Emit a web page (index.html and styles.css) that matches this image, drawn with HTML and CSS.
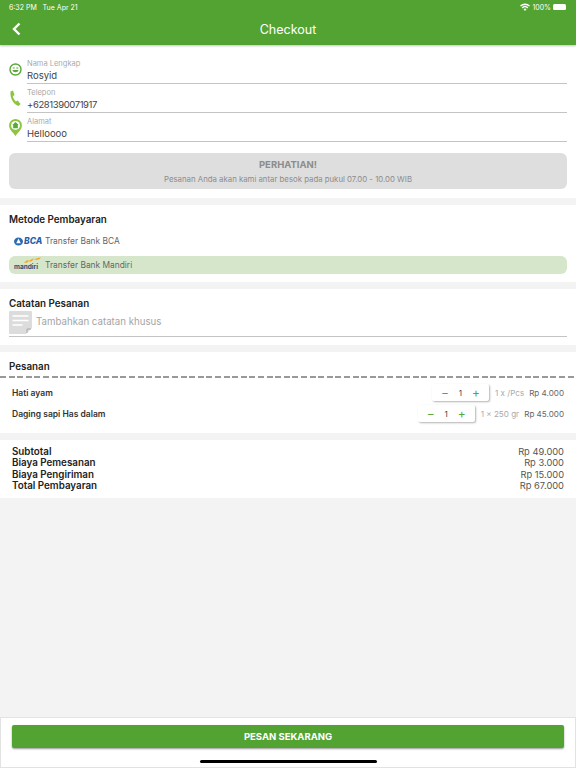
FILE: index.html
```html
<!doctype html>
<html>
    <head>
        <meta http-equiv="Content-Type" content="text/html; charset=utf-8">
        <title>Checkout</title>
        <link rel="stylesheet" href="styles.css">
    </head>
    <body>
        <div class="main">
            <div class="top">
                <div class="status">
                    <span>6:32 PM &nbsp; Tue Apr 21</span>
                    <span class="status-right">
                        <svg width="10" height="8" viewBox="0 0 10 8"><path d="M5 8 3.500 6.300a2 2 0 0 1 3 0zM2.700 5.400 1.700 4.300a4.800 4.800 0 0 1 6.600 0l-1 1.100a3.400 3.400 0 0 0-4.600 0zM1 3.500 0 2.500a7.300 7.300 0 0 1 10 0L9 3.500a5.900 5.900 0 0 0-8 0z" fill="#fff"/></svg>
                        100%
                        <i class="battery"></i>
                    </span>
                </div>
                <div class="bar">
                    <svg class="back" width="9" height="14" viewBox="0 0 9 14"><path d="M7.500 1.500 2 7l5.500 5.500" fill="none" stroke="#fff" stroke-width="2.400"/></svg>
                    <span>Checkout</span>
                </div>
            </div>

            <div class="card form">
                <div class="field">
                    <svg class="icon" width="13" height="13" viewBox="0 0 13 13"><circle cx="6.500" cy="6.500" r="5.500" fill="none" stroke="#5aa83a" stroke-width="1.400"/><path d="M3.700 5h2M7.300 5h2" stroke="#5aa83a"/><path d="M3.500 7h6C9.200 10 3.800 10 3.500 7z" fill="#5aa83a"/></svg>
                    <div class="input">
                        <label>Nama Lengkap</label>
                        <div class="value">Rosyid</div>
                    </div>
                </div>
                <div class="field">
                    <svg class="icon" width="13" height="18" viewBox="0 0 12 18"><path d="M1 1.600 3.500.500 5 5 3.400 6.200c.4 2 1.400 3.800 3 5.200l1.700-.8 3 3.400-2 1.900C4.500 15.500.200 8 1 1.600z" fill="#8cc63f"/></svg>
                    <div class="input">
                        <label>Telepon</label>
                        <div class="value phone">+6281390071917</div>
                    </div>
                </div>
                <div class="field">
                    <svg class="icon" width="13" height="17" viewBox="0 0 12 16"><path d="M6 16C4.500 13 0 10.500 0 6a6 6 0 0 1 12 0c0 4.500-4.500 7-6 10z" fill="#8cc63f"/><circle cx="6" cy="6" r="4.200" fill="#fff"/><path d="M6 2.800 9 5.600H8.200V8.600H3.800V5.600H3z" fill="#5aa83a"/></svg>
                    <div class="input">
                        <label>Alamat</label>
                        <div class="value">Helloooo</div>
                    </div>
                </div>
                <div class="notice">
                    <strong>PERHATIAN!</strong>
                    <p>Pesanan Anda akan kami antar besok pada pukul 07.00 - 10.00 WIB</p>
                </div>
            </div>

            <div class="card pay">
                <h3>Metode Pembayaran</h3>
                <div class="bank">
                    <span class="logo">
                        <svg width="9" height="9" viewBox="0 0 10 9"><ellipse cx="5" cy="4.500" rx="5" ry="4.500" fill="#2a6db5"/><path d="M5 1.200 7.500 6.500h-5z" fill="#fff"/></svg>
                        <b class="bca">BCA</b>
                    </span>
                    Transfer Bank BCA
                </div>
                <div class="bank selected">
                    <span class="logo mandiri">
                        <b>mandiri</b>
                        <svg width="17" height="7" viewBox="0 0 17 7"><path d="M0 6c1.500-2 3-3 5-3L3.500 5.500zM4.500 5C6 3 8 1.500 10 1.500L8 4zM10 3c1.500-1.500 4-2.500 7-2.500l-2 2z" fill="#f5a81c"/></svg>
                    </span>
                    Transfer Bank Mandiri
                </div>
            </div>

            <div class="card note">
                <h3>Catatan Pesanan</h3>
                <div class="note-input">
                    <svg width="23" height="23" viewBox="0 0 23 23"><path d="M1 0h21a1 1 0 0 1 1 1v16l-6 6H1a1 1 0 0 1-1-1V1a1 1 0 0 1 1-1z" fill="#dcdcdc"/><path d="M3.500 5h16M3.500 9.500h16M3.500 14h10" stroke="#fff" stroke-width="1.500"/><path d="M18 22v-4h4" fill="none" stroke="#aaa"/></svg>
                    <span>Tambahkan catatan khusus</span>
                </div>
            </div>

            <div class="card order">
                <h3>Pesanan</h3>
                <div class="dashes"></div>
                <div class="items">
                    <div class="item">
                        <b>Hati ayam</b>
                        <div class="stepper"><i>−</i><span>1</span><i>+</i></div>
                        <span class="unit">1 x /Pcs</span>
                        <span class="price">Rp 4.000</span>
                    </div>
                    <div class="item">
                        <b>Daging sapi Has dalam</b>
                        <div class="stepper"><i>−</i><span>1</span><i>+</i></div>
                        <span class="unit">1 x 250 gr</span>
                        <span class="price">Rp 45.000</span>
                    </div>
                </div>
            </div>

            <div class="card totals">
                <div class="line"><b>Subtotal</b><span>Rp 49.000</span></div>
                <div class="line"><b>Biaya Pemesanan</b><span>Rp 3.000</span></div>
                <div class="line"><b>Biaya Pengiriman</b><span>Rp 15.000</span></div>
                <div class="line"><b>Total Pembayaran</b><span>Rp 67.000</span></div>
            </div>

            <div class="footer">
                <button class="order-btn">PESAN SEKARANG</button>
                <div class="home"></div>
            </div>
        </div>
    </body>
</html>
```

FILE: styles.css
```css
*{
    box-sizing: border-box;
}
body{
    margin: 0;
    background: #f3f3f3;
    font-family: "Inter", "Liberation Sans", sans-serif;
    color: #444;
}
.main{
    width: 576px;
    height: 768px;
    display: flex;
    flex-direction: column;
    overflow: hidden;
}
.top{
    height: 45px;
    background: #53a332;
    color: #fff;
    box-shadow: 0 1px 2px rgba(0,0,0,.25);
    position: relative;
}
.status{
    height: 13px;
    padding: 1px 10px 0 9px;
    display: flex;
    justify-content: space-between;
    align-items: center;
    font-size: 7px;
}
.status-right{
    display: flex;
    align-items: center;
    gap: 2px;
}
.battery{
    width: 13px;
    height: 6px;
    background: #fff;
    border-radius: 1.500px;
}
.bar{
    height: 32px;
    display: flex;
    align-items: center;
    justify-content: center;
    font-size: 12.500px;
    position: relative;
}
.back{
    position: absolute;
    left: 12px;
    top: 9px;
}
.card{
    background: #fff;
    padding: 0 9px;
    margin-bottom: 7px;
}
.card h3{
    margin: 0;
    font-size: 9.800px;
    font-weight: 600;
    color: #222;
}
.form{
    height: 153px;
    padding-top: 10px;
}
.field{
    height: 29px;
    display: flex;
    align-items: center;
}
.icon{
    flex: none;
    margin-right: 5px;
}
.input{
    flex: 1;
    height: 29px;
    border-bottom: 1px solid #c4c4c4;
}
.input label{
    display: block;
    font-size: 7.500px;
    color: #aaa;
    line-height: 10px;
    padding-top: 4px;
    height: 14px;
}
.value{
    font-size: 9.500px;
    line-height: 13px;
    color: #444;
}
.phone{
    letter-spacing: -.4px;
}
.notice{
    margin-top: 11px;
    height: 36px;
    background: #dedede;
    border-radius: 6px;
    text-align: center;
    color: #8c8c8c;
    padding-top: 5px;
}
.notice strong{
    display: block;
    font-size: 9.500px;
    font-weight: 700;
    line-height: 13px;
}
.notice p{
    margin: 3px 0 0;
    font-size: 7.800px;
    line-height: 11px;
}
.pay{
    height: 77px;
    padding-top: 8px;
}
.pay h3{
    line-height: 13px;
}
.bank{
    height: 18px;
    margin-top: 6px;
    display: flex;
    align-items: center;
    font-size: 8.400px;
    color: #666;
    border-radius: 6px;
}
.bank.selected{
    background: #d5e6cb;
}
.logo{
    width: 36px;
    padding-left: 5px;
    display: flex;
    align-items: center;
    gap: 1px;
    flex: none;
}
.bca{
    font-size: 8.500px;
    font-style: italic;
    font-weight: 800;
    color: #1f5fa8;
}
.mandiri{
    position: relative;
    font-size: 6.500px;
    color: #1d4f7c;
}
.mandiri b{
    margin-top: 4px;
}
.mandiri svg{
    position: absolute;
    left: 15px;
    top: -2px;
}
.note{
    height: 56px;
    padding-top: 8px;
}
.note h3{
    line-height: 13px;
}
.note-input{
    height: 26px;
    margin-top: 1px;
    display: flex;
    gap: 4px;
    align-items: flex-start;
    border-bottom: 1px solid #c4c4c4;
}
.note-input span{
    font-size: 9.700px;
    color: #a5a5a5;
    line-height: 21px;
}
.order{
    height: 81px;
    padding: 8px 0 0;
}
.order h3{
    padding: 0 9px;
    line-height: 13px;
    height: 16px;
}
.dashes{
    height: 2px;
    background: repeating-linear-gradient(90deg, #999 0, #999 6px, transparent 6px, transparent 8.600px);
}
.items{
    padding: 4px 12px 0;
}
.item{
    height: 21px;
    display: flex;
    align-items: center;
    font-size: 8.100px;
    color: #666;
}
.item b{
    margin-right: auto;
    font-size: 8.500px;
    font-weight: 600;
    color: #333;
}
.stepper{
    width: 57px;
    height: 17px;
    display: flex;
    align-items: center;
    justify-content: space-around;
    box-shadow: 1px 1px 2px rgba(0,0,0,.3);
    border-radius: 2px;
    color: #444;
    margin-right: 6px;
    padding: 0 4px;
}
.stepper i{
    font-style: normal;
    font-size: 12px;
    color: #5aa83a;
}
.unit{
    color: #aaa;
    margin-right: 5px;
}
.totals{
    height: 58px;
    padding: 6px 12px 0;
    margin-bottom: 0;
}
.line{
    display: flex;
    justify-content: space-between;
    font-size: 9.300px;
    line-height: 11.300px;
    color: #555;
}
.line b{
    font-size: 9.800px;
    font-weight: 600;
    color: #222;
}
.footer{
    margin-top: auto;
    height: 51px;
    background: #fff;
    border: 1px solid #e2e2e2;
    padding: 7px 11px 0;
}
.order-btn{
    display: block;
    width: 100%;
    height: 23px;
    border: 0;
    border-radius: 2px;
    background: #53a332;
    color: #fff;
    font-family: inherit;
    font-size: 9.500px;
    font-weight: 700;
    box-shadow: 0 1px 2px rgba(0,0,0,.4);
}
.home{
    width: 177px;
    height: 3px;
    border-radius: 2px;
    background: #000;
    margin: 12px auto 0;
}
```
